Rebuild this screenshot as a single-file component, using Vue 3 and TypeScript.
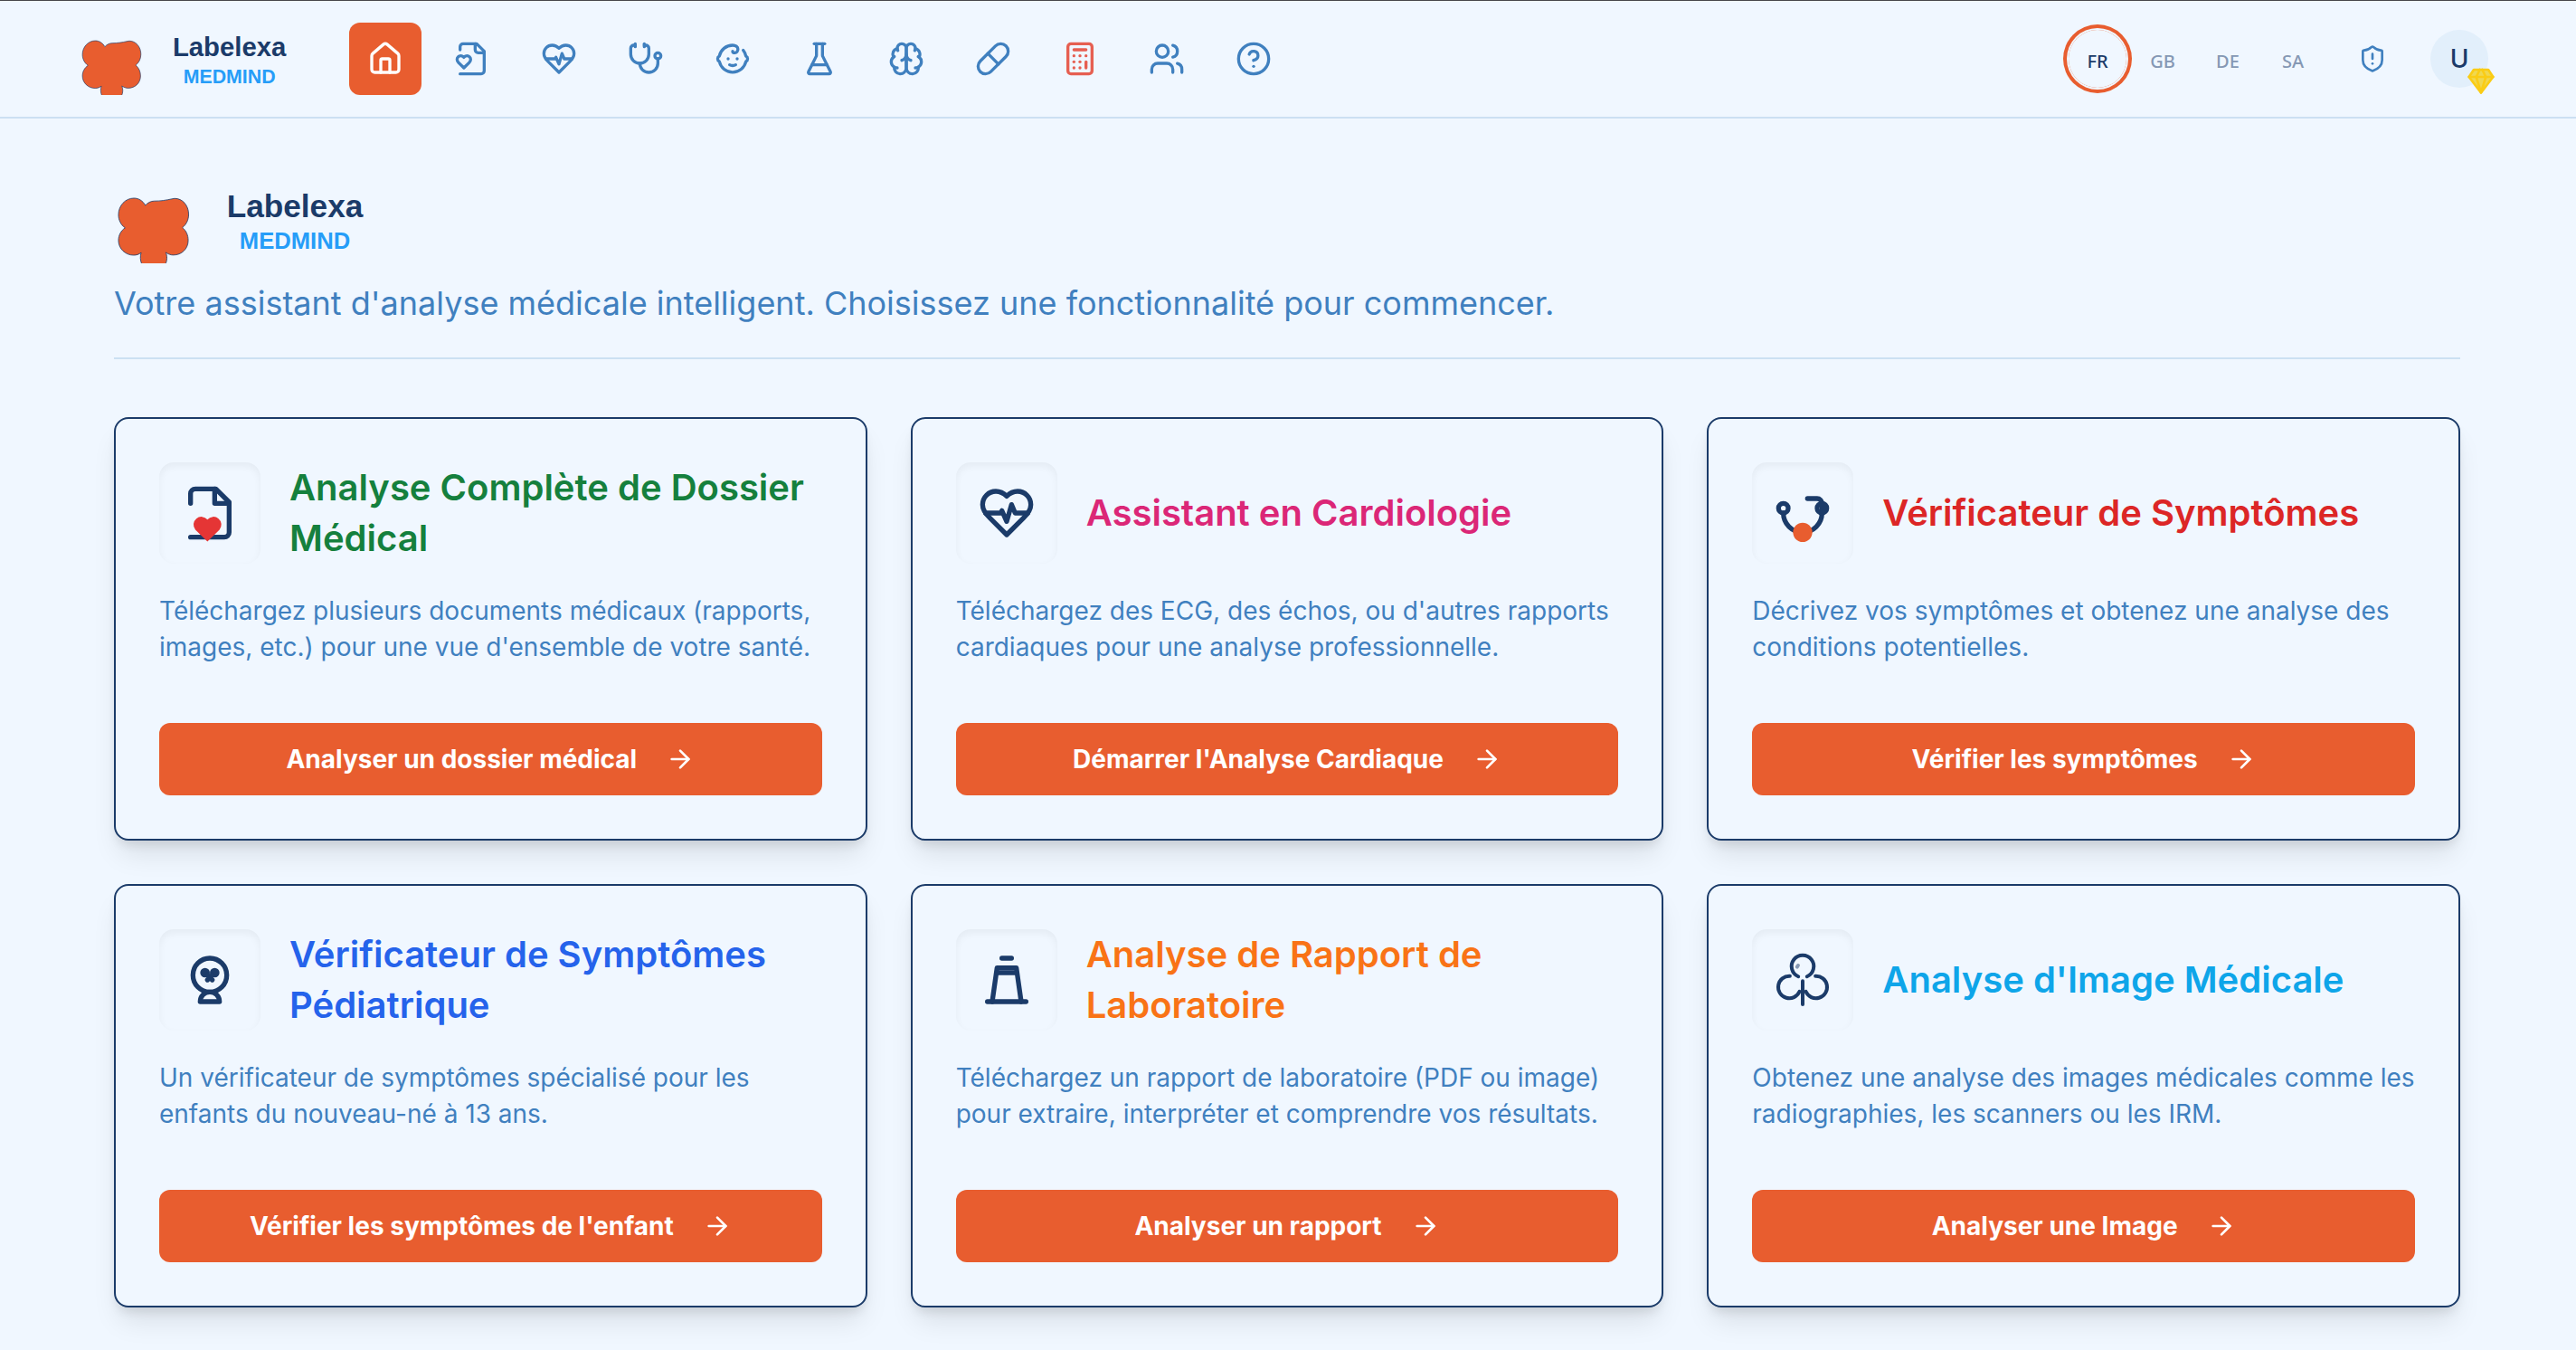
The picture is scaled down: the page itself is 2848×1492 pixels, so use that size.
<script setup lang="ts">
interface NavItem {
  id: string
  label: string
  paths: string[]
  tone?: 'active' | 'alert'
}

interface Feature {
  id: string
  title: string
  color: string
  description: string
  action: string
  icon: string
}

const nav: NavItem[] = [
  {
    id: 'home',
    label: 'Accueil',
    tone: 'active',
    paths: [
      'M15 21v-8a1 1 0 0 0-1-1h-4a1 1 0 0 0-1 1v8',
      'M3 10a2 2 0 0 1 .709-1.528l7-5.999a2 2 0 0 1 2.582 0l7 5.999A2 2 0 0 1 21 10v9a2 2 0 0 1-2 2H5a2 2 0 0 1-2-2z',
    ],
  },
  {
    id: 'record',
    label: 'Dossier médical',
    paths: [
      'M4 22h14a2 2 0 0 0 2-2V7l-5-5H6a2 2 0 0 0-2 2v2',
      'M14 2v4a2 2 0 0 0 2 2h4',
      'M10.29 10.7a2.43 2.43 0 0 0-2.66-.52c-.29.12-.56.3-.78.53l-.35.34-.35-.34a2.43 2.43 0 0 0-2.65-.53c-.3.12-.56.3-.79.53-.95.94-1 2.53.2 3.74L6.5 18l3.6-3.55c1.2-1.21 1.14-2.8.19-3.74Z',
    ],
  },
  {
    id: 'cardio',
    label: 'Cardiologie',
    paths: [
      'M19 14c1.49-1.46 3-3.21 3-5.5A5.5 5.5 0 0 0 16.5 3c-1.76 0-3 .5-4.5 2-1.5-1.5-2.74-2-4.5-2A5.5 5.5 0 0 0 2 8.5c0 2.3 1.5 4.05 3 5.5l7 7Z',
      'M3.22 12H9.5l.5-1 2 4.5 2-7 1.5 3.5h5.27',
    ],
  },
  {
    id: 'symptoms',
    label: 'Symptômes',
    paths: [
      'M11 2v2',
      'M5 2v2',
      'M5 3H4a2 2 0 0 0-2 2v4a6 6 0 0 0 12 0V5a2 2 0 0 0-2-2h-1',
      'M8 15a6 6 0 0 0 12 0v-3',
      'M18 10a2 2 0 1 0 4 0a2 2 0 1 0-4 0',
    ],
  },
  {
    id: 'child',
    label: 'Pédiatrie',
    paths: [
      'M9 12h.01',
      'M15 12h.01',
      'M10 16c.5.3 1.2.5 2 .5s1.5-.2 2-.5',
      'M19 6.3a9 9 0 0 1 1.8 3.9 2 2 0 0 1 0 3.6 9 9 0 0 1-17.6 0 2 2 0 0 1 0-3.6A9 9 0 0 1 12 3c2 0 3.5 1.1 3.5 2.5s-.9 2.5-2 2.5c-.8 0-1.5-.4-1.5-1',
    ],
  },
  {
    id: 'lab',
    label: 'Laboratoire',
    paths: [
      'M10 2v7.527a2 2 0 0 1-.211.896L4.72 20.55a1 1 0 0 0 .9 1.45h12.76a1 1 0 0 0 .9-1.45l-5.069-10.127A2 2 0 0 1 14 9.527V2',
      'M8.5 2h7',
      'M7 16h10',
    ],
  },
  {
    id: 'imaging',
    label: 'Imagerie',
    paths: [
      'M12 5a3 3 0 1 0-5.997.125 4 4 0 0 0-2.526 5.77 4 4 0 0 0 .556 6.588A4 4 0 1 0 12 18Z',
      'M12 5a3 3 0 1 1 5.997.125 4 4 0 0 1 2.526 5.77 4 4 0 0 1-.556 6.588A4 4 0 1 1 12 18Z',
      'M15 13a4.5 4.5 0 0 1-3-4 4.5 4.5 0 0 1-3 4',
      'M17.599 6.5a3 3 0 0 0 .399-1.375',
      'M6.003 5.125A3 3 0 0 0 6.401 6.5',
      'M3.477 10.896a4 4 0 0 1 .585-.396',
      'M19.938 10.5a4 4 0 0 1 .585.396',
      'M6 18a4 4 0 0 1-1.967-.516',
      'M19.967 17.484A4 4 0 0 1 18 18',
    ],
  },
  {
    id: 'drugs',
    label: 'Médicaments',
    paths: ['m10.5 20.5 10-10a4.95 4.95 0 1 0-7-7l-10 10a4.95 4.95 0 1 0 7 7Z', 'm8.5 8.5 7 7'],
  },
  {
    id: 'calculators',
    label: 'Calculateurs',
    tone: 'alert',
    paths: [
      'M6 2h12a2 2 0 0 1 2 2v16a2 2 0 0 1-2 2H6a2 2 0 0 1-2-2V4a2 2 0 0 1 2-2Z',
      'M8 6h8',
      'M16 14v4',
      'M16 10h.01',
      'M12 10h.01',
      'M8 10h.01',
      'M12 14h.01',
      'M8 14h.01',
      'M12 18h.01',
      'M8 18h.01',
    ],
  },
  {
    id: 'users',
    label: 'Communauté',
    paths: [
      'M16 21v-2a4 4 0 0 0-4-4H6a4 4 0 0 0-4 4v2',
      'M5 7a4 4 0 1 0 8 0a4 4 0 1 0-8 0',
      'M22 21v-2a4 4 0 0 0-3-3.87',
      'M16 3.13a4 4 0 0 1 0 7.75',
    ],
  },
  {
    id: 'help',
    label: 'Aide',
    paths: [
      'M2 12a10 10 0 1 0 20 0a10 10 0 1 0-20 0',
      'M9.09 9a3 3 0 0 1 5.83 1c0 2-3 3-3 3',
      'M12 17h.01',
    ],
  },
]

const languages = ['FR', 'GB', 'DE', 'SA']

const features: Feature[] = [
  {
    id: 'record',
    title: 'Analyse Complète de Dossier Médical',
    color: '#15803d',
    description:
      "Téléchargez plusieurs documents médicaux (rapports, images, etc.) pour une vue d'ensemble de votre santé.",
    action: 'Analyser un dossier médical',
    icon: `<path d="M4 22h14a2 2 0 0 0 2-2V7.5L14.5 2H6a2 2 0 0 0-2 2v4"/><path d="M14 2v6h6"/>
      <path fill="#e53535" stroke="none" d="M11 23.8L6 18.9A3.05 3.05 0 0 1 11 14.7A3.05 3.05 0 0 1 16 18.9Z"/>`,
  },
  {
    id: 'cardio',
    title: 'Assistant en Cardiologie',
    color: '#db2777',
    description:
      "Téléchargez des ECG, des échos, ou d'autres rapports cardiaques pour une analyse professionnelle.",
    action: "Démarrer l'Analyse Cardiaque",
    icon: `<path d="M19 14c1.49-1.46 3-3.21 3-5.5A5.5 5.5 0 0 0 16.5 3c-1.76 0-3 .5-4.5 2-1.5-1.5-2.74-2-4.5-2A5.5 5.5 0 0 0 2 8.5c0 2.3 1.5 4.05 3 5.5l7 7Z"/>
      <path d="M3.22 12H9.5l.5-1 2 4.5 2-7 1.5 3.5h5.27"/>`,
  },
  {
    id: 'symptoms',
    title: 'Vérificateur de Symptômes',
    color: '#dc2626',
    description: 'Décrivez vos symptômes et obtenez une analyse des conditions potentielles.',
    action: 'Vérifier les symptômes',
    icon: `<path d="M4 12a8 8 0 0 0 16 0"/><circle cx="4" cy="10" r="2"/><circle cx="20" cy="10" r="2"/>
      <path d="M14 6h4a2 2 0 0 1 2 2v4"/><circle cx="12" cy="20" r="4" fill="#e85d2f" stroke="none"/>`,
  },
  {
    id: 'child',
    title: 'Vérificateur de Symptômes Pédiatrique',
    color: '#2563eb',
    description: 'Un vérificateur de symptômes spécialisé pour les enfants du nouveau-né à 13 ans.',
    action: "Vérifier les symptômes de l'enfant",
    icon: `<circle cx="12" cy="10" r="7"/><path d="M8 21h8a4 4 0 0 0-8 0Z"/>
      <circle cx="10" cy="9" r="1"/><circle cx="14" cy="9" r="1"/><path d="M11 12l2-2M13 12l-2-2"/>`,
  },
  {
    id: 'lab',
    title: 'Analyse de Rapport de Laboratoire',
    color: '#f97316',
    description:
      'Téléchargez un rapport de laboratoire (PDF ou image) pour extraire, interpréter et comprendre vos résultats.',
    action: 'Analyser un rapport',
    icon: `<path d="M10 3h4"/><path d="M6 21L8 7h8l2 14"/><path d="M8 9h8"/><path d="M4 21h16"/>`,
  },
  {
    id: 'imaging',
    title: "Analyse d'Image Médicale",
    color: '#0ea5e9',
    description:
      'Obtenez une analyse des images médicales comme les radiographies, les scanners ou les IRM.',
    action: 'Analyser une Image',
    icon: `<g stroke-width="1.5"><path d="M10.2 10.6a4.6 4.6 0 1 1 3.6 0"/>
      <path d="M6.7 10.4a4.6 4.6 0 1 0 4 6.4"/><path d="M17.3 10.4a4.6 4.6 0 1 1-4 6.4"/>
      <path d="M12 12.5v9.6"/><path d="M9.7 6.6l.4-.6" opacity=".5"/></g>`,
  },
]

const markPath =
  'M21.7 20C20 16.8 17 15 13.8 15C7.8 15 3.1 20.2 3.1 26.5C3.1 30.2 4.9 33.6 7.7 35.5C4.9 37.4 3.1 40.6 3.1 44.2C3.1 50 8 54.4 13.6 54.4C15.6 54.4 17.4 53.8 18.8 52.6C18 55 18 58 19.4 61H35.4C36.9 58 36.9 55 35.8 52.5C37.3 53.6 39.2 54.3 41 54.3C46.8 54.3 51.3 50 51.3 44.2C51.3 40.6 50 37.6 47.3 35.3C50 33.2 51.6 30 51.6 26.2C51.6 20 47.4 15.2 42 15.2L40.6 15.4C36 16.4 32.5 17 27.8 17C25.5 17 23.2 18.2 21.7 20Z'
</script>

<template>
  <div class="page">
    <header class="topbar">
      <a class="brand" href="#" aria-label="Labelexa MedMind">
        <svg class="logo logo-small" viewBox="0 0 200 60">
          <path class="mark" :d="markPath" />
          <text class="brand-name" x="125" y="28">Labelexa</text>
          <text class="brand-sub" x="125" y="50">MEDMIND</text>
        </svg>
      </a>

      <nav class="nav" aria-label="Navigation principale">
        <a
          v-for="item in nav"
          :key="item.id"
          class="nav-link"
          :class="item.tone"
          :href="'#' + item.id"
          :aria-label="item.label"
        >
          <svg class="icon nav-icon" viewBox="0 0 24 24">
            <path v-for="d in item.paths" :key="d" :d="d" />
          </svg>
        </a>
      </nav>

      <div class="tools">
        <div class="languages">
          <button
            v-for="(code, i) in languages"
            :key="code"
            type="button"
            class="lang"
            :class="{ current: i === 0 }"
          >
            {{ code }}
          </button>
        </div>
        <button type="button" class="tool" aria-label="Confidentialité">
          <svg class="icon small-icon" viewBox="0 0 24 24">
            <path
              d="M20 13c0 5-3.5 7.5-7.66 8.95a1 1 0 0 1-.67-.01C7.5 20.5 4 18 4 13V6a1 1 0 0 1 1-1c2 0 4.5-1.2 6.24-2.72a1.17 1.17 0 0 1 1.52 0C14.51 3.81 17 5 19 5a1 1 0 0 1 1 1z"
            />
            <path d="M12 8v4" />
            <path d="M12 16h.01" />
          </svg>
        </button>
        <button type="button" class="tool account" aria-label="Mon compte">
          <span class="avatar">U</span>
          <svg class="icon small-icon gem" viewBox="0 0 24 24">
            <path class="gem-body" d="M6 3h12l4 6-10 13L2 9Z" />
            <path d="M11 3 8 9l4 13 4-13-3-6" />
            <path d="M2 9h20" />
          </svg>
        </button>
      </div>
    </header>

    <main class="content">
      <div class="intro">
        <svg class="logo logo-large" viewBox="0 0 200 60" role="img" aria-label="Labelexa MedMind">
          <path class="mark" :d="markPath" />
          <text class="brand-name" x="125" y="28">Labelexa</text>
          <text class="brand-sub" x="125" y="50">MEDMIND</text>
        </svg>
        <p class="tagline">
          Votre assistant d'analyse médicale intelligent. Choisissez une fonctionnalité pour commencer.
        </p>
      </div>

      <section class="grid">
        <article v-for="f in features" :key="f.id" class="card">
          <div class="card-head">
            <div class="icon-box">
              <svg class="icon feature-icon" viewBox="0 0 24 24" v-html="f.icon"></svg>
            </div>
            <h2 class="card-title" :style="{ color: f.color }">{{ f.title }}</h2>
          </div>
          <p class="card-text">{{ f.description }}</p>
          <button type="button" class="action">
            {{ f.action }}
            <svg class="icon small-icon" viewBox="0 0 24 24">
              <path d="M5 12h14" />
              <path d="m12 5 7 7-7 7" />
            </svg>
          </button>
        </article>
      </section>
    </main>
  </div>
</template>

<style>
body {
  background: #f0f7ff;
}
</style>

<style scoped>
.page {
  --bg: #f0f7ff;
  --navy: #1b3b69;
  --blue: #4080bf;
  --orange: #e85d2f;
  --line: #cce0f2;
  min-height: 100vh;
  box-sizing: border-box;
  border-top: 1px solid #47474b;
  background: var(--bg);
  color: var(--navy);
  font-family: Inter, 'Liberation Sans', sans-serif;
}

button {
  border: 0;
  padding: 0;
  background: none;
  color: inherit;
  font: inherit;
  cursor: pointer;
}

.icon {
  flex: none;
  fill: none;
  stroke: currentColor;
  stroke-width: 2;
  stroke-linecap: round;
  stroke-linejoin: round;
}

.small-icon {
  width: 32px;
  height: 32px;
}

.topbar {
  display: flex;
  align-items: center;
  gap: 32px;
  height: 128px;
  padding: 0 89px 0 87px;
  border-bottom: 2px solid var(--line);
}

.brand {
  display: flex;
}

.logo {
  display: block;
}

.logo-small {
  height: 80px;
}

.logo-large {
  height: 96px;
}

.mark {
  fill: var(--orange);
  stroke: var(--navy);
  stroke-width: 0.5;
}

.brand-name,
.brand-sub {
  font-family: 'Liberation Sans', Arial, sans-serif;
  font-weight: 700;
  text-anchor: middle;
}

.brand-name {
  font-size: 22px;
  fill: var(--navy);
}

.brand-sub {
  font-size: 16px;
  fill: #269df8;
}

.nav {
  display: flex;
  gap: 16px;
}

.nav-link {
  display: flex;
  align-items: center;
  justify-content: center;
  width: 80px;
  height: 80px;
  border-radius: 12px;
  color: var(--blue);
}

.nav-link.active {
  background: var(--orange);
  color: #fff;
}

.nav-link.alert {
  color: #e65f51;
}

.nav-icon {
  width: 40px;
  height: 40px;
}

.tools {
  display: flex;
  align-items: center;
  gap: 16px;
  margin-left: auto;
}

.languages {
  display: flex;
  gap: 8px;
}

.lang {
  width: 64px;
  height: 64px;
  padding-top: 4px;
  border-radius: 50%;
  color: #8598b4;
  font-family: 'Noto Sans', sans-serif;
  font-size: 20px;
  font-weight: 500;
}

.lang.current {
  color: var(--navy);
  box-shadow:
    0 0 0 2px var(--bg),
    0 0 0 6px var(--orange);
}

.tool {
  display: flex;
  align-items: center;
  justify-content: center;
  position: relative;
  width: 80px;
  height: 80px;
  color: var(--blue);
}

.avatar {
  display: flex;
  align-items: center;
  justify-content: center;
  width: 64px;
  height: 64px;
  border-radius: 50%;
  background: #e2effb;
  color: var(--navy);
  font-size: 28px;
  font-weight: 500;
}

.gem {
  position: absolute;
  right: 0;
  bottom: 0;
  color: #facc15;
}

.gem-body {
  fill: #f0d850;
}

.content {
  padding: 64px 128px 32px 126px;
}

.intro {
  padding-bottom: 32px;
  border-bottom: 2px solid var(--line);
}

.tagline {
  margin: 16px 0 0;
  color: var(--blue);
  font-size: 36px;
  line-height: 56px;
}

.grid {
  display: grid;
  grid-template-columns: repeat(3, minmax(0, 1fr));
  gap: 48px;
  margin-top: 64px;
}

.card {
  display: flex;
  flex-direction: column;
  padding: 48px;
  border: 2px solid var(--navy);
  border-radius: 16px;
  background: var(--bg);
  box-shadow:
    0 20px 30px -6px rgba(0, 0, 0, 0.1),
    0 8px 12px -4px rgba(0, 0, 0, 0.1);
}

.card-head {
  display: flex;
  align-items: center;
  gap: 32px;
}

.icon-box {
  display: flex;
  flex: none;
  align-items: center;
  justify-content: center;
  width: 112px;
  height: 112px;
  border-radius: 16px;
  box-shadow: inset 0 4px 8px rgba(0, 0, 0, 0.05);
}

.feature-icon {
  width: 64px;
  height: 64px;
}

.card-title {
  margin: 0;
  font-size: 40px;
  font-weight: 600;
  line-height: 56px;
}

.card-text {
  flex: 1;
  margin: 32px 0 64px;
  color: var(--blue);
  font-size: 28px;
  line-height: 40px;
}

.action {
  display: flex;
  align-items: center;
  justify-content: center;
  gap: 32px;
  height: 80px;
  border-radius: 12px;
  background: var(--orange);
  color: #fff;
  font-size: 28px;
  font-weight: 700;
}
</style>
